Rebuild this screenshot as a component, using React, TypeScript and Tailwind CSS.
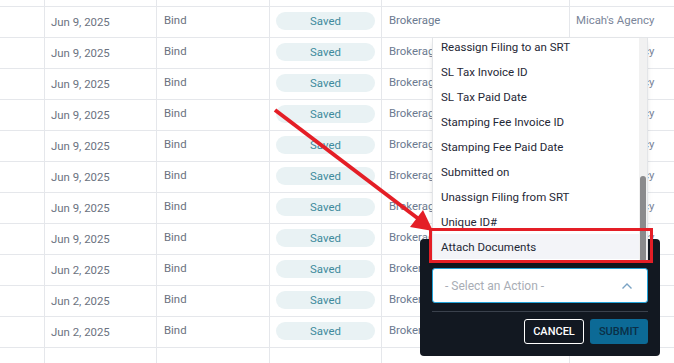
import React from "react";

const rows = [
  "Jun 9, 2025","Jun 9, 2025","Jun 9, 2025","Jun 9, 2025","Jun 9, 2025","Jun 9, 2025","Jun 9, 2025","Jun 9, 2025",
  "Jun 2, 2025","Jun 2, 2025","Jun 2, 2025",
];

const items = [
  "Reassign Filing to an SRT",
  "SL Tax Invoice ID",
  "SL Tax Paid Date",
  "Stamping Fee Invoice ID",
  "Stamping Fee Paid Date",
  "Submitted on",
  "Unassign Filing from SRT",
  "Unique ID#",
  "Attach Documents",
];

function Row({ date }: { date: string }) {
  return (
    <div className="flex h-[31px] border-b border-[#e5e7eb]">
      <div className="w-[45px] shrink-0 border-r border-[#e5e7eb]" />
      <div className="w-[112px] shrink-0 border-r border-[#e5e7eb] pl-[6px] pt-[7px] text-[#6b7280]">{date}</div>
      <div className="w-[113px] shrink-0 border-r border-[#e5e7eb] pl-[7px] pt-[5px] text-[#6b7280]">Bind</div>
      <div className="w-[112px] shrink-0 border-r border-[#e5e7eb] pl-[6px] pt-[5px]">
        <div className="flex h-[18px] w-[99px] items-center justify-center rounded-full bg-[#e9f2f4] text-[#3e8a9c]">Saved</div>
      </div>
      <div className="w-[188px] shrink-0 border-r border-[#e5e7eb] pl-[7px] pt-[5px] text-[#6b7a90]">Brokerage</div>
      <div className="flex-1 pl-[6px] pt-[5px] text-[#7a8599] whitespace-nowrap">Micah's Agency</div>
    </div>
  );
}

export default function App() {
  return (
    <div className="relative h-[363px] w-[674px] overflow-hidden bg-white text-[11.4px] leading-[16px]" style={{ fontFamily: "Roboto, 'Noto Sans', sans-serif" }}>
      <div className="flex h-[7px] border-b border-[#e5e7eb]">
        <div className="w-[45px] border-r border-[#e5e7eb]" />
        <div className="w-[112px] border-r border-[#e5e7eb]" />
        <div className="w-[113px] border-r border-[#e5e7eb]" />
        <div className="w-[112px] border-r border-[#e5e7eb]" />
        <div className="w-[188px] border-r border-[#e5e7eb]" />
      </div>
      {rows.map((d, i) => (
        <Row key={i} date={d} />
      ))}
      <div className="flex h-[60px]">
        <div className="w-[45px] border-r border-[#e5e7eb]" />
        <div className="w-[112px] border-r border-[#e5e7eb]" />
        <div className="w-[113px] border-r border-[#e5e7eb]" />
        <div className="w-[112px] border-r border-[#e5e7eb]" />
        <div className="w-[188px] border-r border-[#e5e7eb]" />
      </div>

      {/* Action panel */}
      <div className="absolute left-[420px] top-[239px] h-[117px] w-[240px] rounded-[4px] bg-[#121821] px-[12px]">
        <div className="mt-[29px] flex h-[35px] items-center justify-between rounded-[3px] border border-[#22a3d9] bg-white pl-[12px] pr-[14px]">
          <span className="text-[12px] text-[#a8adb5]">- Select an Action -</span>
          <svg width="12" height="8" viewBox="0 0 12 8"><path d="M1.5 6.5 L6 2 L10.5 6.5" fill="none" stroke="#7aa3c4" strokeWidth="1.4" /></svg>
        </div>
        <div className="mt-[8px] h-px bg-[#3a414c]" />
        <div className="mt-[7px] flex justify-end gap-[6px]">
          <div className="flex h-[25px] w-[60px] items-center justify-center rounded-[3px] border border-white text-[11px] font-medium text-white">CANCEL</div>
          <div className="flex h-[25px] w-[58px] items-center justify-center rounded-[3px] bg-[#0c6a96] text-[11px] font-medium text-[#0a2f47]">SUBMIT</div>
        </div>
      </div>

      {/* Dropdown list */}
      <div className="absolute left-[432px] top-[37px] h-[225px] w-[216px] overflow-hidden border border-[#e3e5e8] bg-white shadow-md">
        <div className="-mt-[4px] mr-[8px]">
          {items.map((it) => (
            <div key={it} className={`flex h-[25px] items-center pl-[8px] text-[11.5px] text-[#1f2836] ${it === "Attach Documents" ? "bg-[#f3f4f8]" : ""}`}>{it}</div>
          ))}
        </div>
        <div className="absolute right-0 top-0 h-full w-[8px] bg-[#f1f1f1]">
          <div className="absolute left-[1px] top-[138px] h-[86px] w-[6px] rounded-full bg-[#8a8a8c]" />
        </div>
      </div>

      {/* Red highlight box */}
      <div className="absolute left-[429px] top-[228px] h-[35px] w-[224px] border-[3px] border-[#e41e26]" />

      {/* Arrow */}
      <svg className="pointer-events-none absolute left-0 top-0" width="674" height="363">
        <line x1="275" y1="110" x2="420" y2="220" stroke="#e41e26" strokeWidth="4" />
        <polygon points="433,231 410,227 423,210" fill="#e41e26" />
      </svg>
    </div>
  );
}
